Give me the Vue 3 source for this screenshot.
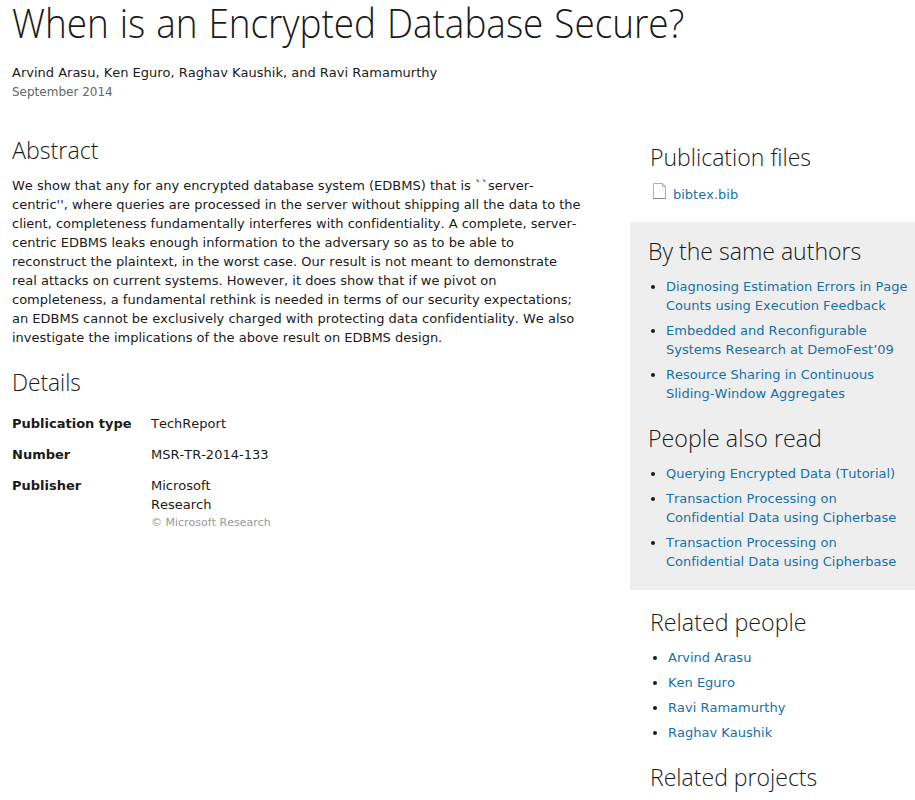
<template>
  <div class="page">
    <header>
      <h1>When is an Encrypted Database Secure?</h1>
      <p class="authors">Arvind Arasu, Ken Eguro, Raghav Kaushik, and Ravi Ramamurthy</p>
      <p class="date">September 2014</p>
    </header>

    <div class="columns">
      <main>
        <h2 class="abstract-title">Abstract</h2>
        <p class="abstract">
          We show that any for any encrypted database system (EDBMS) that is ``server-<br>
          centric'', where queries are processed in the server without shipping all the data to the<br>
          client, completeness fundamentally interferes with confidentiality. A complete, server-<br>
          centric EDBMS leaks enough information to the adversary so as to be able to<br>
          reconstruct the plaintext, in the worst case. Our result is not meant to demonstrate<br>
          real attacks on current systems. However, it does show that if we pivot on<br>
          completeness, a fundamental rethink is needed in terms of our security expectations;<br>
          an EDBMS cannot be exclusively charged with protecting data confidentiality. We also<br>
          investigate the implications of the above result on EDBMS design.
        </p>
        <h2 class="details-title">Details</h2>
        <dl>
          <template v-for="item in details" :key="item.label">
            <dt>{{ item.label }}</dt>
            <dd>
              {{ item.value }}
              <small v-if="item.note">{{ item.note }}</small>
            </dd>
          </template>
        </dl>
      </main>

      <aside>
        <section class="files">
          <h2 class="files-title">Publication files</h2>
          <div class="file">
            <svg width="13" height="16" viewBox="0 0 13 16" fill="none">
              <path d="M.5 .5H9.5L12.5 3.5V15.5H.5Z" fill="#fff" stroke="#b0b0b0" />
              <path d="M9.5 .5V3.5H12.5" stroke="#b0b0b0" />
              <path d="M0 15.5H13" stroke="#8c8c8c" />
            </svg>
            <a href="#">bibtex.bib</a>
          </div>
        </section>

        <section class="box">
          <h2 class="same-title">By the same authors</h2>
          <ul>
            <li v-for="(paper, i) in sameAuthors" :key="i"><a href="#">{{ paper }}</a></li>
          </ul>
          <h2 class="read-title">People also read</h2>
          <ul>
            <li v-for="(paper, i) in alsoRead" :key="i"><a href="#">{{ paper }}</a></li>
          </ul>
        </section>

        <section class="related">
          <h2 class="people-title">Related people</h2>
          <ul>
            <li v-for="person in people" :key="person"><a href="#">{{ person }}</a></li>
          </ul>
          <h2 class="projects-title">Related projects</h2>
        </section>
      </aside>
    </div>
  </div>
</template>


<script setup>
import { ref } from 'vue';

const details = ref([
  { label: 'Publication type', value: 'TechReport' },
  { label: 'Number', value: 'MSR-TR-2014-133' },
  { label: 'Publisher', value: 'Microsoft\nResearch', note: '© Microsoft Research' },
]);

const sameAuthors = ref([
  'Diagnosing Estimation Errors in Page\nCounts using Execution Feedback',
  'Embedded and Reconfigurable\nSystems Research at DemoFest’09',
  'Resource Sharing in Continuous\nSliding-Window Aggregates',
]);

const alsoRead = ref([
  'Querying Encrypted Data (Tutorial)',
  'Transaction Processing on\nConfidential Data using Cipherbase',
  'Transaction Processing on\nConfidential Data using Cipherbase',
]);

const people = ref(['Arvind Arasu', 'Ken Eguro', 'Ravi Ramamurthy', 'Raghav Kaushik']);
</script>


<style>
body {
  background-color: #fff;
}
</style>

<style scoped>
.page {
  height: 800px;
  font: 13px/19px "DejaVu Sans", sans-serif;
  font-kerning: none;
  font-variant-ligatures: none;
  color: #1a1a1a;
}

h1,
h2 {
  width: max-content;
  margin: 0;
  font-family: "Open Sans", sans-serif;
  font-weight: 300;
  white-space: nowrap;
  transform-origin: left;
}

h1 {
  height: 48px;
  font-size: 41px;
  line-height: 44px;
  word-spacing: 1.5px;
  transform: scaleX(0.9);
}

h2 {
  font-size: 24px;
  line-height: 32px;
  transform: scaleX(0.96);
}

.abstract-title,
.read-title,
.people-title {
  transform: scaleX(0.968);
}

.details-title {
  transform: scaleX(0.945);
}

p {
  margin: 0;
}

header {
  height: 134px;
  padding-left: 12px;
}

.authors {
  margin-top: 15px;
}

.date {
  padding-top: 1px;
  font-size: 12px;
  color: #666;
}

.columns {
  display: flex;
}

main {
  width: 618px;
  padding-left: 12px;
}

.abstract {
  margin: 10px 0 19px;
  white-space: nowrap;
}

dl {
  display: grid;
  grid-template-columns: 139px 130px;
  row-gap: 12px;
  margin: 16px 0 0;
}

dt {
  font-weight: bold;
}

dd {
  margin: 0;
  white-space: pre-line;
}

small {
  display: block;
  font-size: 11px;
  line-height: 18px;
  white-space: nowrap;
  color: #999;
}

aside {
  flex: 1;
}

.files {
  height: 81px;
  padding: 7px 0 0 20px;
}

.file {
  display: flex;
  align-items: flex-start;
  padding: 10px 0 0 3px;
}

.file a {
  margin: 2px 0 0 7px;
}

.box {
  height: 355px;
  padding: 13px 0 0 18px;
  background-color: #eee;
}

.related {
  padding: 16px 0 0 20px;
}

ul {
  margin: 10px 0 0;
  padding-left: 18px;
}

li {
  margin-bottom: 6px;
  white-space: pre;
}

.read-title,
.projects-title {
  margin-top: 19px;
}

a {
  color: #1570a6;
  text-decoration: none;
}
</style>
